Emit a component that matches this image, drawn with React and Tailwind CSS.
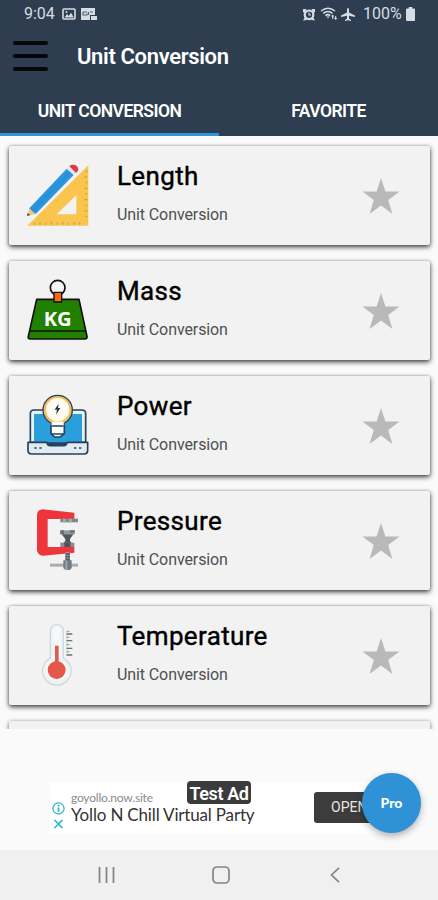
import { useState } from "react"

const LengthIcon = () => (
<svg viewBox="78 72 192 192" className="w-16 h-16">
<path fillRule="evenodd" d="M82 257 L265 76 V257 Z M170 223 H229 V165 Z" fill="#f9c54e"/>
<path d="M104 254v-6M120 254v-9M137 254v-6M154 254v-9M171 254v-6M188 254v-9M205 254v-6M222 254v-9M239 254v-6M262 94h-6M262 111h-9M262 128h-6M262 145h-9M262 162h-6M262 179h-9M262 196h-6M262 213h-9M262 230h-6" stroke="#c59a45" strokeWidth="3"/>
<path d="M114 236l5 5M132 218l5 5M150 200l5 5M168 182l5 5M186 164l5 5M204 146l5 5M222 128l5 5" stroke="#e0a83b" strokeWidth="2"/>
<path d="M88 205 L107 222 L82 228 Z" fill="#f3c77b"/>
<path d="M83 219 L91 225 L81 228 Z" fill="#4b4b50"/>
<path d="M200 86 L221 105 L107 222 L88 205 Z" fill="#2b96dd"/>
<path d="M207 93 L214 99 L101 216 L94 210 Z" fill="#2990d7"/>
<path d="M200 86 L206 80 L227 99 L221 105 Z" fill="#e3e6e8"/>
<path d="M208 79 C216 71 230 74 234 84 C236 91 233 95 228 99 Z" fill="#dc3b4a"/>
</svg>
)

const MassIcon = () => (
<svg viewBox="48 57 192 192" className="w-16 h-16">
<circle cx="143" cy="83" r="22" fill="#f5f5f5" stroke="#111" strokeWidth="5"/>
<path d="M80 118 H207 L231 229 Q232 237 225 237 H61 Q53 237 55 229 Z" fill="#218000" stroke="#111" strokeWidth="5" strokeLinejoin="round"/>
<path d="M59 213 H228" stroke="#111" strokeWidth="4"/>
<path d="M132 97 H155 V126 H132 Z" fill="#f96a10" stroke="#111" strokeWidth="4"/>
<text x="143" y="199" textAnchor="middle" textLength="84" lengthAdjust="spacingAndGlyphs" fontFamily="Open Sans" fontWeight="700" fontSize="58" fill="#fff">KG</text>
</svg>
)

const PowerIcon = () => (
<svg viewBox="48 57 192 192" className="w-16 h-16">
<path d="M61 202 V116 Q61 105 72 105 H216 Q227 105 227 116 V202 Z" fill="#e9f1f5" stroke="#24425c" strokeWidth="5"/>
<path d="M72 117 H216 V202 H72 Z" fill="#299fdb"/>
<path d="M54 202 H110 Q113 212 120 212 H162 Q169 212 172 202 H233 V226 Q233 237 222 237 H65 Q54 237 54 226 Z" fill="#e3ebf1" stroke="#24425c" strokeWidth="5" strokeLinejoin="round"/>
<path d="M111 204 H168 V211 H111 Z" fill="#24425c"/>
<path d="M73 219h7M88 219h7M192 219h7M207 219h7" stroke="#24425c" strokeWidth="5"/>
<path d="M123 151 H163 V176 L151 186 H134 L123 176 Z" fill="#fff" stroke="#24425c" strokeWidth="5"/>
<circle cx="143" cy="105" r="44" fill="#f9bd56" stroke="#24425c" strokeWidth="4"/>
<circle cx="143" cy="104" r="35" fill="#fffdf2"/>
<path d="M125 140 H161 V155 H125 Z" fill="#fffdf2"/>
<path d="M125 153 H161 M125 177 H161" stroke="#24425c" strokeWidth="4"/>
<path d="M146 86 L134 104 H141 L138 119 L151 99 H144 Z" fill="#1c3348"/>
</svg>
)

const PressureIcon = () => (
<svg viewBox="48 57 192 192" className="w-16 h-16">
<path d="M166 180 H180 V214 H166 Z" fill="#555c63"/>
<path d="M151 158 H193 V172 H151 Z" fill="#858b90"/>
<path d="M163 158 H181 V172 H163 Z" fill="#4c5258"/>
<path d="M193 68 L97 58 Q81 60 81 76 V180 Q82 196 99 197 L193 188 V171 H113 V87 H193 Z" fill="#ed353b"/>
<path d="M151 86 H204 V97 H151 Z" fill="#81888d"/>
<path d="M159 86h8v11h-8zM177 86h8v11h-8z" fill="#a8acaf"/>
<path d="M151 121 H194 V133 H151 Z" fill="#92979b"/>
<path d="M155 133 H190 L180 147 V153 L185 158 H160 L166 153 V147 Z" fill="#4e555b"/>
<path d="M151 121h11v12h-11zM180 121h14v7h-14z" fill="#686f75"/>
<path d="M166 188h14M166 196h14M166 204h14" stroke="#989da1" strokeWidth="3"/>
<path d="M120 221 H204 V230 H120 Z" fill="#a9adb0"/>
<path d="M160 211 H185 V234 L179 240 H166 L160 234 Z" fill="#747b80"/>
<path d="M166 211h6v29h-6z" fill="#a0a5a8"/>
</svg>
)

const TemperatureIcon = () => (
<svg viewBox="48 57 192 192" className="w-16 h-16">
<path d="M121 78 Q121 59 140 59 Q160 59 160 78 V159 A43 43 0 1 1 121 159 Z" fill="#edf2f3" stroke="#cfdadd" strokeWidth="4"/>
<path d="M129 80 Q129 67 140 67 Q152 67 152 80 V164 H129 Z" fill="#f7f9f9"/>
<circle cx="140" cy="196" r="32" fill="#f8f9f9"/>
<path d="M135 122 H146 V180 H135 Z" fill="#e25a4d"/>
<circle cx="140" cy="195" r="27" fill="#e35849"/>
<path d="M171 77 V153" stroke="#ced6d8" strokeWidth="4"/>
<path d="M170 87h17M170 107h17M170 130h17M170 150h17" stroke="#667378" strokeWidth="4"/>
<path d="M170 79h8M170 97h9M170 119h9M170 140h9" stroke="#96a1a5" strokeWidth="3"/>
</svg>
)

const units = [
{ name: "Length", Icon: LengthIcon },
{ name: "Mass", Icon: MassIcon },
{ name: "Power", Icon: PowerIcon },
{ name: "Pressure", Icon: PressureIcon },
{ name: "Temperature", Icon: TemperatureIcon },
]

function StatusBar(){

return(

<div className="h-7 flex items-center justify-between pl-[24px] pr-[23px] text-[#d5dce3] text-[16px] leading-none">

<div className="flex items-center">
<span className="w-[38px]">9:04</span>

<svg viewBox="0 0 14 12" className="w-[14px] h-[12px]">
<rect x="1" y="1" width="12" height="10" rx="1" fill="none" stroke="currentColor" strokeWidth="1.6"/>
<path d="M2.5 9.5 L5 6 L6.8 8 L9 4.8 L11.8 9.5 Z" fill="currentColor"/>
<circle cx="4.5" cy="4" r="1" fill="currentColor"/>
</svg>

<svg viewBox="0 0 16 12" className="w-[16px] h-[12px] ml-[5px]">
<path d="M0 0 H14 V7 H9 V12 H0 Z M10 8 H16 V12 H10 Z" fill="currentColor"/>
<path d="M2 4 H6 M2 4 V7 H6 V5.5 M7.5 4 V7 M9 4 H12" stroke="#54647a" strokeWidth="1.2" fill="none"/>
</svg>
</div>

<div className="flex items-center">
<svg viewBox="0 0 14 13" className="w-[14px] h-[13px]">
<path d="M1 1 H4.5 L3 4 L1 4.5 Z M13 1 H9.5 L11 4 L13 4.5 Z M1 12.5 L3 9 L5 12 Z M13 12.5 L11 9 L9 12 Z" fill="currentColor"/>
<circle cx="7" cy="6.8" r="4.3" fill="none" stroke="currentColor" strokeWidth="2.2"/>
<path d="M7 4.5 V7 H9" stroke="currentColor" strokeWidth="1.1" fill="none"/>
</svg>

<svg viewBox="0 0 18 14" className="w-[18px] h-[14px] ml-[4px]">
<path d="M1 4 Q8 -1.5 15 4 M3.2 6.4 Q8 2.6 12.5 6.4 M5.4 8.6 Q8 6.6 10.2 8.6" stroke="currentColor" strokeWidth="1.5" fill="none"/>
<path d="M6.5 9.5h3L8 11.5z M11 9.5l1.8-2 1.6 2h-1.1v2.5h-1.2V9.5z M14 11h1v-1.8h1.2V11h1.2l-1.7 2z" fill="currentColor"/>
</svg>

<svg viewBox="0 0 14 13" className="w-[14px] h-[13px] ml-[3px]">
<path d="M7 0 Q8 0 8 1.5 V4.6 L14 7.5 V9 L8 7.8 V10.6 L10 12 V13 L7 12.3 L4 13 V12 L6 10.6 V7.8 L0 9 V7.5 L6 4.6 V1.5 Q6 0 7 0Z" fill="currentColor"/>
</svg>

<span className="ml-[8px] w-[41px] whitespace-nowrap">100%</span>

<svg viewBox="0 0 9 14" className="w-[9px] h-[14px] ml-[2px]">
<path d="M2.7 0 H6.3 V1.5 H8 Q9 1.5 9 2.5 V13 Q9 14 8 14 H1 Q0 14 0 13 V2.5 Q0 1.5 1 1.5 H2.7Z" fill="currentColor"/>
</svg>
</div>

</div>

)

}

function UnitCard({ name, Icon }){

return(

<div className="h-[98.5px] shrink-0 bg-[#f2f2f2] rounded-[2px] flex items-start shadow-[0_2px_5px_rgba(0,0,0,0.75),0_0_3px_rgba(0,0,0,0.2)]">

<div className="ml-[17px] mt-[18px] w-16 h-16 shrink-0">
<Icon/>
</div>

<div className="ml-[27px] flex-1 pt-[13px]">
<h2 className="text-[26px] leading-[34px] tracking-[0.35px] text-black [-webkit-text-stroke:0.4px_black]">{name}</h2>
<p className="mt-[12px] text-[16px] leading-[20px] tracking-[-0.1px] text-[#505050]">Unit Conversion</p>
</div>

<svg viewBox="0 0 38 36" className="w-[38px] h-[36px] mt-[31.5px] mr-[30px] shrink-0">
<path d="M19 0 L23.4 13.6 H37.5 L26.2 22 L30.4 36 L19 27.5 L7.6 36 L11.8 22 L0.5 13.6 H14.6 Z" fill="#b9b9b9"/>
</svg>

</div>

)

}

export default function App(){

const [tab,setTab] = useState("units")

return(

<div className="w-[438px] h-[900px] flex flex-col overflow-hidden bg-[#fafafa] font-[Roboto,sans-serif]">

{/* HEADER */}

<header className="h-[136px] shrink-0 bg-[#2e3e50] text-white flex flex-col">

<StatusBar/>

<div className="h-[56px] flex items-center pl-[13px]">
<button className="flex flex-col gap-[9px] w-[35px]">
<span className="h-[4px] rounded-full bg-[#05070a]"/>
<span className="h-[4px] rounded-full bg-[#05070a]"/>
<span className="h-[4px] rounded-full bg-[#05070a]"/>
</button>
<h1 className="ml-[29px] pt-px text-[22px] font-semibold leading-none tracking-[-0.35px]">Unit Conversion</h1>
</div>

<div className="flex flex-1 text-[17.5px] font-semibold tracking-[-0.55px]">
<button
onClick={()=>setTab("units")}
className={tab === "units" ? "flex-1 pt-[5px] border-b-[3px] border-[#2f95d8]" : "flex-1 pt-[5px] border-b-[3px] border-transparent"}
>
UNIT CONVERSION
</button>
<button
onClick={()=>setTab("favorite")}
className={tab === "favorite" ? "flex-1 pt-[5px] border-b-[3px] border-[#2f95d8]" : "flex-1 pt-[5px] border-b-[3px] border-transparent"}
>
FAVORITE
</button>
</div>

</header>


{/* UNIT LIST */}

<main className="h-[593px] shrink-0 overflow-hidden flex flex-col gap-[16.5px] pt-[10px] pl-[9px] pr-[8.5px]">

{units.map(unit=>(
<UnitCard key={unit.name} name={unit.name} Icon={unit.Icon}/>
))}

<div className="h-[98px] shrink-0 bg-[#f2f2f2] rounded-[2px] shadow-[0_1px_4px_rgba(0,0,0,0.6)]"/>

</main>


{/* AD */}

<div className="flex-1 pt-[53px]">

<div className="relative ml-[50px] w-[338px] h-[52px] bg-white flex items-start">

<div className="w-[20px] pt-[20px] flex flex-col items-center ml-[-2px] gap-[4px] text-[#27b2cb]">
<svg viewBox="0 0 14 14" className="w-[13px] h-[13px]">
<circle cx="7" cy="7" r="6" fill="none" stroke="currentColor" strokeWidth="1.3"/>
<path d="M7 6v4.5M7 3.2v1.6" stroke="currentColor" strokeWidth="1.8"/>
</svg>
<svg viewBox="0 0 10 10" className="w-[11px] h-[10px]">
<path d="M1 1 L9 9 M9 1 L1 9" stroke="currentColor" strokeWidth="1.6"/>
</svg>
</div>

<div className="ml-[3px] pt-[9px] whitespace-nowrap font-[Lato,sans-serif]">
<p className="text-[12px] leading-[14px] tracking-[-0.2px] text-[#8a8a8a]">goyollo.now.site</p>
<p className="text-[17px] leading-[19px] tracking-[-0.17px] text-[#333]">Yollo N Chill Virtual Party</p>
</div>

<span className="absolute left-[137px] top-[-1px] w-[64px] h-[23px] rounded-[4px] bg-[#3b3b3b] text-white text-[18px] font-semibold leading-[25px] tracking-[-0.4px] text-center whitespace-nowrap">Test Ad</span>

<button className="absolute left-[264px] top-[10px] w-[74px] h-[31px] rounded-[3px] bg-[#3c3c3c] text-[#e6e6e6] text-[14px] text-left pl-[17px]">OPEN</button>

<button className="absolute left-[312px] top-[-9.5px] w-[59px] h-[60px] rounded-full bg-[#2f91d6] text-white text-[14px] font-black font-[Lato,sans-serif] shadow-[0_3px_7px_rgba(0,0,0,0.3)]">Pro</button>

</div>

</div>


{/* NAVIGATION */}

<nav className="h-[50px] shrink-0 bg-[#f0f0f0] flex items-center pl-[98px] text-[#858585]">
<svg viewBox="0 0 17 16" className="w-[17px] h-[16px]">
<path d="M1.5 0V16M8.5 0V16M15.5 0V16" stroke="currentColor" strokeWidth="1.8"/>
</svg>
<svg viewBox="0 0 18 18" className="w-[18px] h-[18px] ml-[97px]">
<rect x="1" y="1" width="16" height="16" rx="4" fill="none" stroke="currentColor" strokeWidth="1.7"/>
</svg>
<svg viewBox="0 0 10 16" className="w-[10px] h-[16px] ml-[100px]">
<path d="M9 0.8 L1.5 8 L9 15.2" fill="none" stroke="currentColor" strokeWidth="1.7"/>
</svg>
</nav>

</div>

)

}
